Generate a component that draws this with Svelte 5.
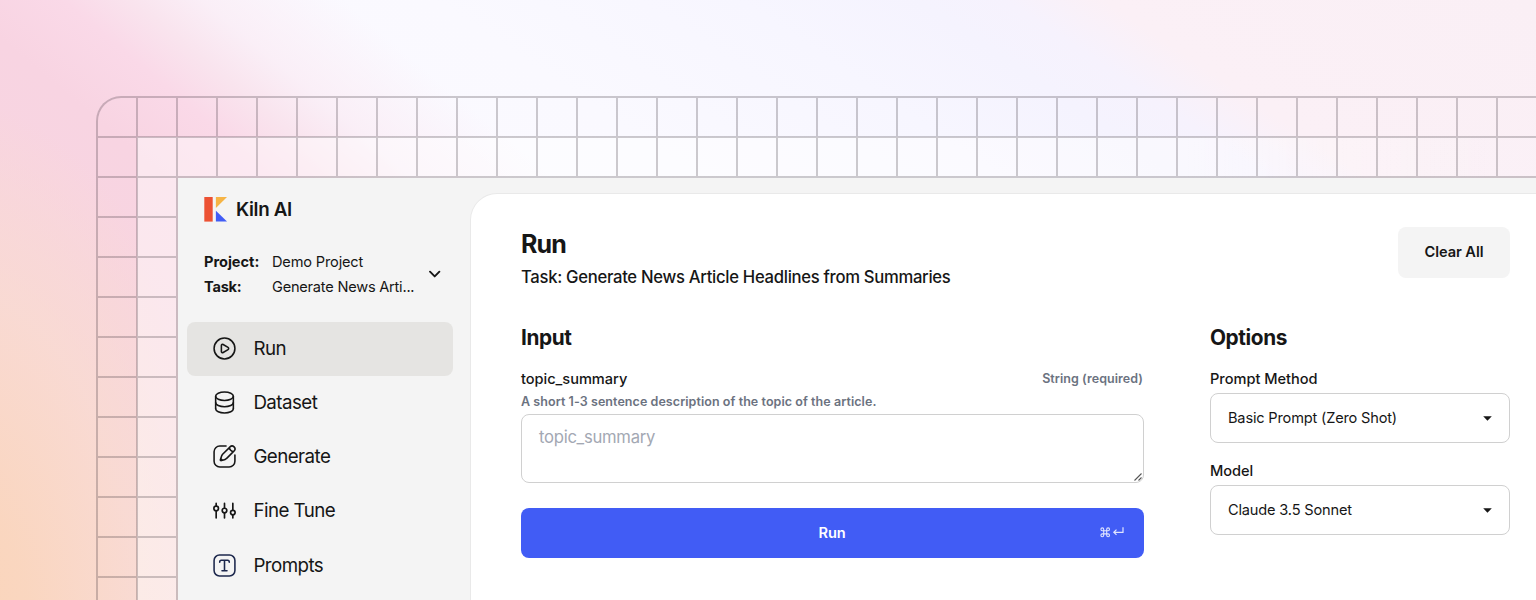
<script>
  const menu = ['Run', 'Dataset', 'Generate', 'Fine Tune', 'Prompts'];
  const options = [
    { label: 'Prompt Method', value: 'Basic Prompt (Zero Shot)' },
    { label: 'Model', value: 'Claude 3.5 Sonnet' }
  ];
</script>

<div class="stage">
  <div class="frame">
    <div class="window">
      <aside>
        <div class="brand">
          <svg width="24" height="25" viewBox="0 0 24 25">
            <path fill="#ec5133" d="M.3 0h8.4v24.6H.3z" />
            <path fill="#f6b445" d="M11.9 0H23L11.9 11z" />
            <path fill="#415cf5" d="M11.9 13.8V24.6H23z" />
          </svg>
          <span>Kiln AI</span>
        </div>
        <div class="project">
          <div class="facts">
            <b class="wide">Project:</b><span>Demo Project</span>
            <b>Task:</b><span class="task">Generate News Arti...</span>
          </div>
          <svg width="14" height="10" viewBox="0 0 14 10" fill="none" stroke="#161616" stroke-width="1.9" stroke-linecap="round" stroke-linejoin="round"><path d="M2 1.7 6.7 6.4l4.7-4.7" /></svg>
        </div>
        <nav>
          {#each menu as item, i}
            <a class:active={i === 0}>
              <svg width="25" height="25" viewBox="0 0 24 24" fill="none" stroke={i === 4 ? '#1c274c' : '#161616'} stroke-width="1.5" stroke-linecap="round">
                {#if i === 0}
                  <circle cx="12" cy="12" r="10" />
                  <path d="M15.4137 10.941C16.1954 11.4026 16.1954 12.5974 15.4137 13.059L10.6935 15.8458C9.93371 16.2944 9 15.7105 9 14.7868L9 9.21316C9 8.28947 9.93371 7.70561 10.6935 8.15419L15.4137 10.941Z" />
                {:else if i === 1}
                  <path d="M3.5 18V6M20.5 6v12" />
                  <ellipse cx="12" cy="6" rx="8.5" ry="4" />
                  <path d="M20.5 12c0 2.21-3.8 4-8.5 4s-8.5-1.79-8.5-4M20.5 18c0 2.21-3.8 4-8.5 4s-8.5-1.79-8.5-4" />
                {:else if i === 2}
                  <path d="M22 10.5V16.5A5.5 5.5 0 0 1 16.5 22H7.5A5.5 5.5 0 0 1 2 16.5V7.5A5.5 5.5 0 0 1 7.5 2H13.5" />
                  <path d="M16.652 3.45506L17.3009 2.80624C18.3759 1.73125 20.1188 1.73125 21.1938 2.80624C22.2687 3.88124 22.2687 5.62415 21.1938 6.69914L20.5449 7.34795M16.652 3.45506C16.652 3.45506 16.7331 4.83379 17.9497 6.05032C19.1662 7.26685 20.5449 7.34795 20.5449 7.34795M16.652 3.45506L10.6872 9.41993C10.2832 9.82394 10.0812 10.0259 9.90743 10.2487C9.70249 10.5114 9.52679 10.7957 9.38344 11.0965C9.26191 11.3515 9.17157 11.6225 8.99089 12.1646L8.41242 13.9M20.5449 7.34795L14.5801 13.3128C14.1761 13.7168 13.9741 13.9188 13.7513 14.0926C13.4886 14.2975 13.2043 14.4732 12.9035 14.6166C12.6485 14.7381 12.3775 14.8284 11.8354 15.0091L10.1 15.5876M10.1 15.5876L8.97709 15.9619C8.71035 16.0508 8.41626 15.9814 8.21744 15.7826C8.01862 15.5837 7.9492 15.2897 8.03811 15.0229L8.41242 13.9M10.1 15.5876L8.41242 13.9" />
                {:else if i === 3}
                  <g stroke-width="1.6">
                    <circle cx="4" cy="10" r="2.2" /><circle cx="12" cy="12" r="2.2" /><circle cx="20" cy="14" r="2.2" />
                    <path d="M4 5.2v2.3M4 12.5v6.6M12 5.2v4.3M12 14.5v4.6M20 5.2v6.3M20 16.5v2.6" />
                  </g>
                {:else}
                  <rect x="2" y="2" width="20" height="20" rx="5.2" />
                  <path d="M7.4 8.9c0-1.2.4-1.9 1.6-1.9h6c1.2 0 1.6.7 1.6 1.9M12 7v10M9.6 17h4.8" />
                {/if}
              </svg>
              <span>{item}</span>
            </a>
          {/each}
        </nav>
      </aside>

      <main>
        <header>
          <div>
            <h1>Run</h1>
            <p class="sub">Task: Generate News Article Headlines from Summaries</p>
          </div>
          <button class="clear">Clear All</button>
        </header>
        <div class="cols">
          <section class="input">
            <h2>Input</h2>
            <div class="labels"><span class="label">topic_summary</span><span class="hint">String (required)</span></div>
            <div class="hint desc">A short 1-3 sentence description of the topic of the article.</div>
            <div class="area">
              <span>topic_summary</span>
              <svg width="8" height="8" viewBox="0 0 8 8" stroke="#555" stroke-width="1.1"><path d="M.5 7.5l7-7M4.5 7.5l3-3" /></svg>
            </div>
            <button class="run">
              <span>Run</span>
              <svg width="26" height="14" viewBox="0 0 26 14" fill="none" stroke="#dfe4fe" stroke-width="1.1">
                <path d="M4.7 4.4V3.3A1.4 1.4 0 1 0 3.3 4.7h5.8A1.4 1.4 0 1 0 7.7 3.3v6A1.4 1.4 0 1 0 9.1 7.9H3.3A1.4 1.4 0 1 0 4.7 9.3V4.4z" />
                <path d="M24 1.3v5h-9.2M17.5 3.6 14.8 6.3l2.7 2.6" stroke-width="1.2" />
              </svg>
            </button>
          </section>
          <section class="options">
            <h2>Options</h2>
            {#each options as o}
              <div class="label">{o.label}</div>
              <div class="select">
                <span>{o.value}</span>
                <svg width="9" height="5" viewBox="0 0 9 5"><path d="M.2.2h8.6L4.5 4.8z" fill="#161616" /></svg>
              </div>
            {/each}
          </section>
        </div>
      </main>
    </div>
  </div>
</div>

<style>
  :global(body) { margin: 0; overflow: hidden; }
  * { box-sizing: border-box; }
  .stage {
    width: 1536px; height: 600px; overflow: hidden; padding: 96px 0 0 96px;
    font-family: Inter, "Liberation Sans", sans-serif; color: #161616;
    background:
      radial-gradient(ellipse 290px 540px at -50px 640px, #fad5b8 0%, rgba(250, 214, 190, .95) 28%, rgba(249, 219, 207, .75) 65%, rgba(249, 214, 218, 0) 100%),
      linear-gradient(40deg, #f9d9de 0, #f8d5e0 300px, #f8d4e2 430px, #fad9e8 500px, #f9e4ee 545px, rgba(250, 236, 245, .8) 590px, rgba(250, 249, 254, 0) 680px),
      linear-gradient(34deg, #fbfaff 500px, #faf9ff 740px, #f7f6ff 910px, #f5f3fe 1010px, #f6f2fd 1060px, #fbf0f6 1115px, #faeff5 1356px);
  }
  .frame {
    height: 640px; padding: 80px 0 0 80px;
    border: solid rgba(30, 22, 30, .22); border-width: 2px 0 0 2px;
    border-top-left-radius: 25px;
    background:
      conic-gradient(from 90deg at 2px 2px, transparent 90deg, rgba(30, 22, 30, .22) 0) -2px -2px / 40px 40px,
      linear-gradient(90deg, rgba(255, 255, 255, .45) 1050px, rgba(255, 255, 255, .1) 1350px) 39px 39px no-repeat;
    background-clip: padding-box;
  }
  .window { display: flex; height: 500px; background: #f4f4f4; }
  aside { width: 292px; padding: 18px 17px 0 9px; flex: none; }
  .brand { display: flex; gap: 8px; height: 26px; padding-left: 17px; align-items: center; font-size: 18.75px; font-weight: 600; }
  .brand span { letter-spacing: -.35px; }
  .project { display: flex; justify-content: space-between; align-items: center; margin-top: 27px; padding: 0 11px 0 17px; height: 51px; font-size: 14.6px; line-height: 25px; }
  .facts { display: grid; grid-template-columns: 68px auto; white-space: nowrap; }
  .facts b { font-weight: 700; letter-spacing: -.25px; }
  .facts .wide { letter-spacing: -.02px; }
  .facts span { letter-spacing: -.17px; }
  .facts .task { letter-spacing: -.23px; }
  nav { display: flex; flex-direction: column; margin-top: 21.5px; }
  nav a { display: flex; align-items: center; gap: 16.8px; height: 54.15px; padding-left: 24.6px; border-radius: 8px; font-size: 18.75px; letter-spacing: -.56px; color: #161616; }
  nav a.active { background: #e5e4e2; }
  main { flex: 1; margin-top: 15px; padding: 33px 26px 0 50px; background: #fff; border-top-left-radius: 27px; border: 1px solid #e9e9e9; border-width: 1px 0 0 1px; }
  header { display: flex; justify-content: space-between; height: 98px; }
  h1 { margin: 2px 0 0; font-size: 25px; line-height: 31px; font-weight: 700; letter-spacing: -.9px; }
  .sub { margin: 5px 0 0; font-size: 16.67px; line-height: 25px; font-weight: 500; letter-spacing: -.3px; }
  button { font: inherit; border: 0; }
  .clear { width: 112px; height: 51px; padding: 0 0 2px; border-radius: 8px; background: #f4f4f4; color: #161616; font-size: 14.6px; font-weight: 600; letter-spacing: -.06px; }
  .cols { display: flex; justify-content: space-between; }
  .input { width: 623px; }
  .options { width: 300px; }
  h2 { margin: 0; font-size: 20.8px; line-height: 26px; font-weight: 700; letter-spacing: -.4px; }
  .label { font-size: 14.6px; line-height: 20px; font-weight: 500; letter-spacing: -.03px; }
  .labels { display: flex; justify-content: space-between; align-items: center; height: 20px; margin-top: 18px; }
  .hint { font-size: 12.5px; font-weight: 580; line-height: 18px; color: #6b7280; letter-spacing: .06px; }
  .labels .hint { padding: 0 1px 1px 0; }
  .desc { margin-top: 3px; height: 21px; padding-top: 1px; }
  .area { position: relative; height: 69px; margin-top: 1px; padding: 10px 17px; border: 1px solid #d0d0d0; border-radius: 8px; font-size: 16.67px; line-height: 24px; color: #a3a8b3; letter-spacing: -.28px; }
  .area svg { position: absolute; right: 1px; bottom: 1px; }
  .run { display: flex; align-items: center; width: 100%; height: 50px; margin-top: 25px; padding: 0 19px 0 44px; border-radius: 8px; background: #415cf5; color: #fff; font-size: 14.6px; font-weight: 600; }
  .run span { flex: 1; text-align: center; letter-spacing: -.2px; }
  .options .label { margin-top: 18px; }
  .select { display: flex; align-items: center; justify-content: space-between; height: 50px; margin-top: 4px; padding: 0 17px; border: 1px solid #d0d0d0; border-radius: 8px; font-size: 14.6px; letter-spacing: -.18px; }
</style>
